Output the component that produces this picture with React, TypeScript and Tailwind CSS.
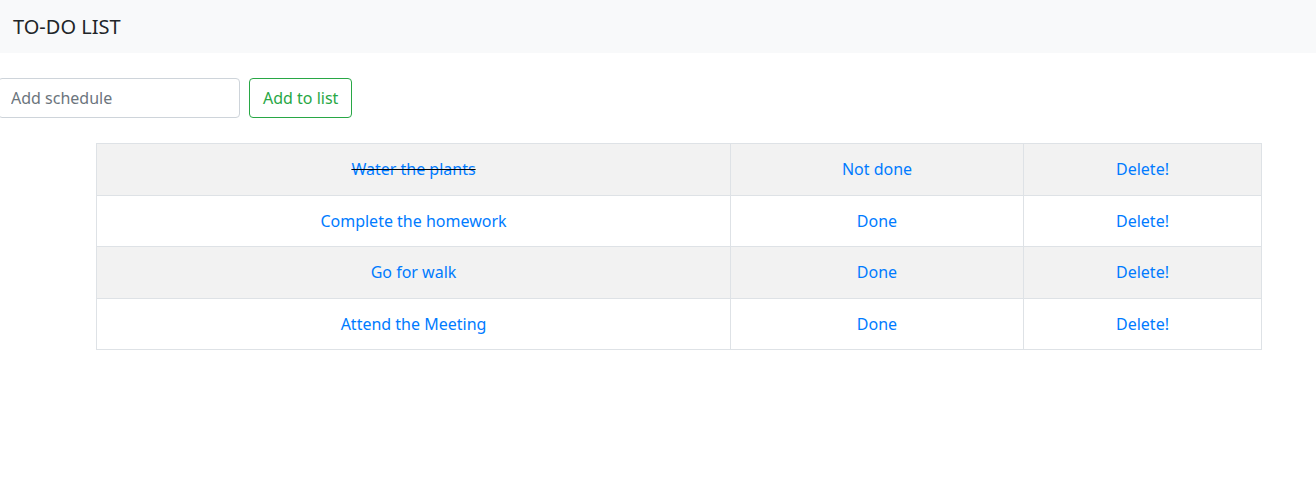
import React from "react"

const todos = [
    { titulo: "Water the plants", hecho: true },
    { titulo: "Complete the homework", hecho: false },
    { titulo: "Go for walk", hecho: false },
    { titulo: "Attend the Meeting", hecho: false },
]

const App = () => {
    return (
        <div className="min-h-[497px] bg-white font-['Noto_Sans',sans-serif] text-[16px] text-[#212529]">
            <nav className="h-[53px] bg-[#f8f9fa] flex items-center px-[13px]">
                <span className="text-[20px] text-[#212529] leading-none">TO-DO LIST</span>
            </nav>

            <div className="mt-[25px] flex items-center gap-[9px]">
                <input
                    className="-ml-[2px] w-[242px] h-[40px] px-3 border border-[#ced4da] rounded-[4px] placeholder:text-[#6c757d] outline-none"
                    placeholder="Add schedule"
                />
                <button className="h-[40px] px-[13px] border border-[#28a745] text-[#28a745] rounded-[4px] bg-white">
                    Add to list
                </button>
            </div>

            <div className="mt-[25px] pl-[96px] pr-[54px]">
                <table className="w-[1166px] border-collapse border border-[#dee2e6] text-center">
                    <tbody>
                        {todos.map((t, i) => (
                            <tr key={t.titulo} className={i % 2 === 0 ? "bg-[#f2f2f2]" : "bg-white"}>
                                <td className="w-[634px] h-[51.5px] border border-[#dee2e6]">
                                    <span className={t.hecho ? "text-[#007bff] line-through decoration-black" : "text-[#007bff]"}>{t.titulo}</span>
                                </td>
                                <td className="w-[293px] border border-[#dee2e6] text-[#007bff]">{t.hecho ? "Not done" : "Done"}</td>
                                <td className="border border-[#dee2e6] text-[#007bff]">Delete!</td>
                            </tr>
                        ))}
                    </tbody>
                </table>
            </div>
        </div>
    )
}

export default App
